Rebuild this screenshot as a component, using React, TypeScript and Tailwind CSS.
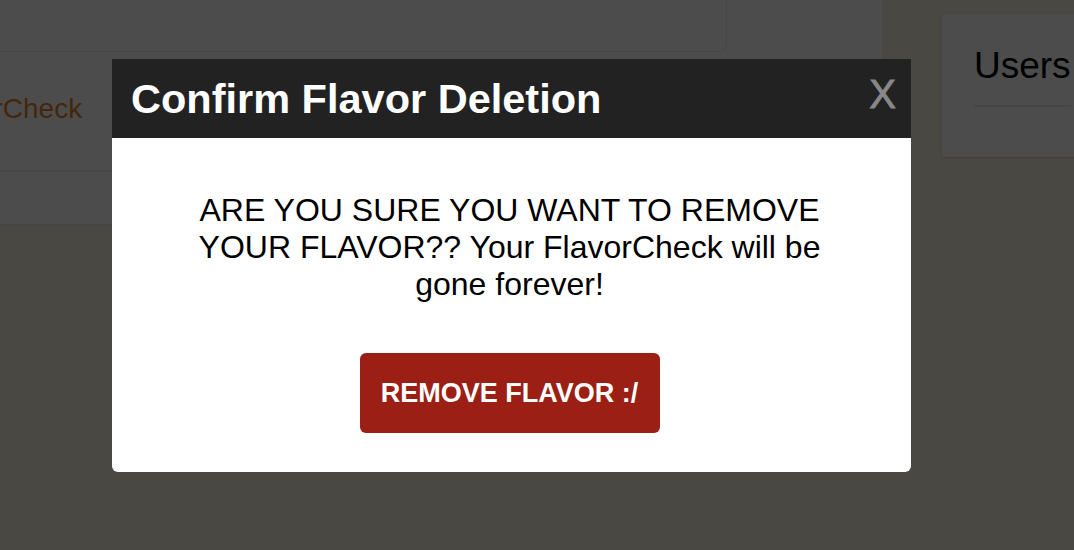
import React from "react";

const font = { fontFamily: '"Liberation Sans", Arial, Helvetica, sans-serif' };

function BackgroundPage() {
  return (
    <div className="flex h-full w-full bg-[#f7f0df]">
      <div className="flex h-[226px] w-[882px] shrink-0 flex-col bg-white">
        <div className="h-[52px] w-[727px] rounded-br-lg border-r border-b border-[#ebebeb]" />
        <div className="flex h-[120px] items-center border-b-2 border-[#ececec]">
          <span className="ml-[-75px] pb-[4px] text-[28px] text-[#e2822c]">FlavorCheck</span>
        </div>
        <div className="h-[54px] border-b-2 border-[#ececec]" />
      </div>
      <div className="mt-[14px] ml-[60px] h-[143px] flex-1 bg-white pt-[31px] pr-8 pl-[32px] shadow-sm">
        <div className="text-[37px] leading-[42px] text-black">Users</div>
        <div className="mt-[18px] h-[2px] bg-[#ececec]" />
      </div>
    </div>
  );
}

function ConfirmModal() {
  return (
    <div className="absolute top-[59px] left-[112px] w-[799px] overflow-hidden rounded-b-md bg-white">
      <div className="flex h-[79px] items-center justify-between bg-[#222222] pr-[15px] pl-[19px]">
        <h2 className="text-[41.5px] font-bold leading-none text-white">Confirm Flavor Deletion</h2>
        <button className="mb-[10px] text-[40px] leading-none text-[#888888] [-webkit-text-stroke:0.9px_#888888]">
          X
        </button>
      </div>
      <div className="flex flex-col items-center pt-[54px] pr-[82px] pb-[39px] pl-[78px]">
        <p className="text-center text-[32px] leading-[37px] text-black">
          ARE YOU SURE YOU WANT TO REMOVE YOUR FLAVOR?? Your FlavorCheck will be gone forever!
        </p>
        <button className="mt-[50px] h-[80px] w-[300px] rounded-md bg-[#9b1f14] text-[27px] font-bold text-white">
          REMOVE FLAVOR :/
        </button>
      </div>
    </div>
  );
}

export default function App() {
  return (
    <div className="relative h-[550px] w-full overflow-hidden" style={font}>
      <BackgroundPage />
      <div className="absolute inset-0 bg-black/70" />
      <ConfirmModal />
    </div>
  );
}
